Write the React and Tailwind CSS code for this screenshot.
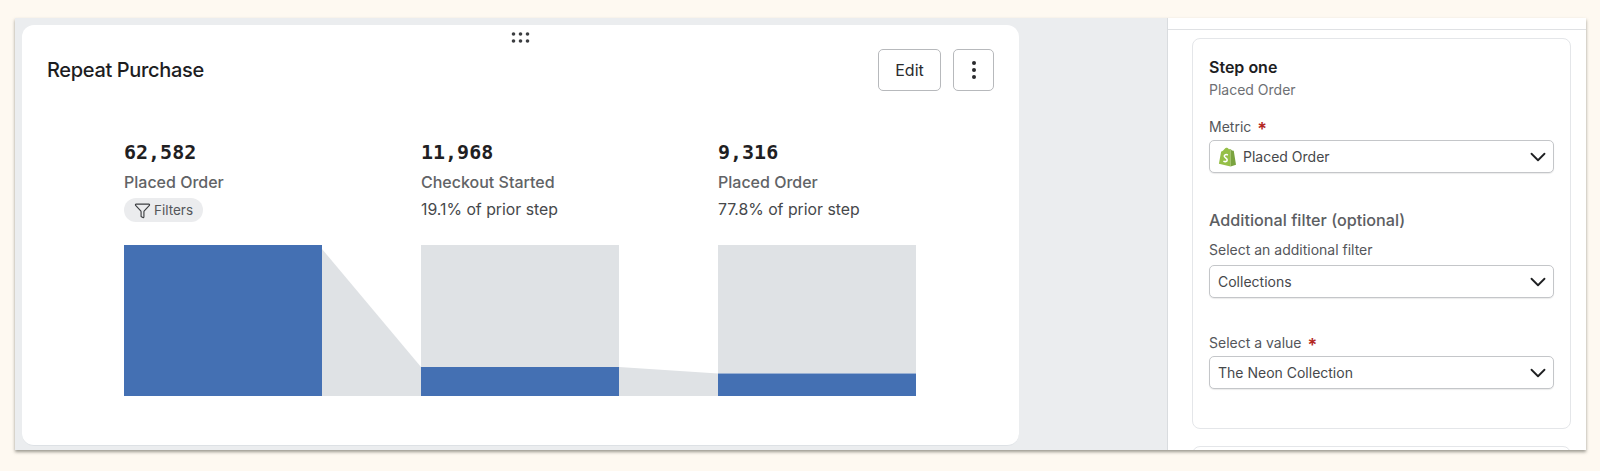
import React from "react";
import { ChevronDown, Funnel } from "lucide-react";

const inter = "font-['Inter','Noto_Sans',sans-serif]";

function Step({ value, label, children }) {
  return (
    <div className="w-[297px] shrink-0">
      <div className="h-7 font-['DejaVu_Sans_Mono',monospace] text-[20px] leading-7 font-bold text-[#1f2022]">{value}</div>
      <div className="mt-1.5 h-5 text-[16px] leading-5 font-medium text-[#616366]">{label}</div>
      <div className="mt-1.5 h-6 text-[15.800px] leading-6 text-[#46484b]">{children}</div>
    </div>
  );
}

function Funnelchart() {
  return (
    <svg width="792" height="151" viewBox="0 0 792 151" className="mt-[23px] block">
      <rect x="0" y="0" width="198" height="151" fill="#4470b3" />
      <polygon points="198,4 297,122 297,151 198,151" fill="#dfe2e5" />
      <rect x="297" y="0" width="198" height="122" fill="#dfe2e5" />
      <rect x="297" y="122" width="198" height="29" fill="#4470b3" />
      <polygon points="495,122 594,128.500 594,151 495,151" fill="#dfe2e5" />
      <rect x="594" y="0" width="198" height="128.500" fill="#dfe2e5" />
      <rect x="594" y="128.500" width="198" height="22.500" fill="#4470b3" />
    </svg>
  );
}

function ShopifyBag() {
  return (
    <svg width="18" height="20" viewBox="0 0 20 22" className="shrink-0">
      <path d="M1 18.500 L3.500 5 C5 4.500 6 4 6.500 3 C7.500 1 9 .5 10 .6 C11 .6 11.500 1.500 12 2.500 L14 2.200 L14 21.500 Z" fill="#95bf47" />
      <path d="M14 2.200 L15.500 3.700 L17.500 4 L20 19.500 L14 21.500 Z" fill="#7aa33f" />
      <path d="M11 8.800 C9 7.800 6.800 8.500 7 10.200 C7.200 11.900 10.200 12 10.200 14.200 C10.200 16.200 8 16.700 6 15.500" fill="none" stroke="#ffffff" strokeWidth="1.700" />
    </svg>
  );
}

function Select({ children }) {
  return (
    <div className="flex h-[33px] w-[345px] items-center justify-between rounded-[5px] border border-[#c4c6c9] bg-white pr-[2px] pl-2 text-[14px] text-[#46484b] shadow-[0_1px_1px_rgba(0,0,0,0.08)]">
      <div className="flex items-center gap-[7px]">{children}</div>
      <ChevronDown size={26} strokeWidth={1.7} className="text-[#1f2022]" />
    </div>
  );
}

function Req() {
  return <span className="ml-[6px] translate-y-[4px] text-[18px] leading-5 font-semibold text-[#b3261e]">*</span>;
}

export default function App() {
  return (
    <div className={`h-[471px] w-[1600px] overflow-hidden bg-[#fef9f1] pt-[18px] pl-[15px] ${inter}`}>
      <div className="flex h-[432px] w-[1571px] overflow-hidden bg-[#ebedef] shadow-[0_2px_3px_rgba(60,60,50,0.5)]">
        <div className="w-[581px] flex-1 pt-[7px] pl-[7px]">
          <div className="relative h-[421px] w-[997px] rounded-xl border-b border-[#dde1e5] bg-white">
            <svg width="20" height="11" viewBox="0 0 20 11" className="absolute top-[7px] left-[489px]" fill="#3c3e41">
              <circle cx="2.500" cy="2" r="1.800" /><circle cx="9.500" cy="2" r="1.800" /><circle cx="16.500" cy="2" r="1.800" />
              <circle cx="2.500" cy="9" r="1.800" /><circle cx="9.500" cy="9" r="1.800" /><circle cx="16.500" cy="9" r="1.800" />
            </svg>
            <div className="flex items-start justify-between pt-[24px] pr-[25px] pl-[25px]">
              <div className="mt-[9px] text-[20px] leading-[24px] font-medium tracking-[-0.34px] text-[#1d1d1f]">Repeat Purchase</div>
              <div className="flex gap-3">
                <div className="flex h-[42px] w-[63px] items-center justify-center rounded-[5px] border border-[#b7b9bc] text-[16px] text-[#2a2b2d]">Edit</div>
                <div className="flex h-[42px] w-[41px] flex-col items-center justify-center gap-[3px] rounded-[5px] border border-[#b7b9bc]">
                  <span className="h-1 w-1 rounded-full bg-[#2a2b2d]" />
                  <span className="h-1 w-1 rounded-full bg-[#2a2b2d]" />
                  <span className="h-1 w-1 rounded-full bg-[#2a2b2d]" />
                </div>
              </div>
            </div>
            <div className="mt-[47px] pl-[102px]">
              <div className="flex">
                <Step value="62,582" label="Placed Order">
                  <span className="inline-flex h-6 w-[79px] items-center gap-[3px] rounded-full bg-[#ebecee] pl-[10px] text-[13.500px] text-[#54565a]">
                    <Funnel size={17} strokeWidth={1.6} className="shrink-0 text-[#3c3e41]" />
                    Filters
                  </span>
                </Step>
                <Step value="11,968" label="Checkout Started">19.1% of prior step</Step>
                <Step value="9,316" label="Placed Order">77.8% of prior step</Step>
              </div>
              <Funnelchart />
            </div>
          </div>
        </div>
        <div className="h-full w-[419px] shrink-0 overflow-hidden border-l border-[#d9dcdf] bg-white">
          <div className="h-3 border-b border-[#dfe1e4]" />
          <div className="mt-2 mr-[15px] ml-[24px] h-[391px] rounded-lg border border-[#e4e6e9] px-4 pt-[18px]">
            <div className="text-[16px] leading-5 font-semibold text-[#1d1d1f]">Step one</div>
            <div className="mt-[3px] text-[14px] leading-5 text-[#6e7074]">Placed Order</div>
            <div className="mt-[16px] flex h-5 items-center text-[14px] text-[#54565a]">Metric<Req /></div>
            <div className="mt-[4px]">
              <Select>
                <ShopifyBag />
                Placed Order
              </Select>
            </div>
            <div className="mt-[36px] text-[16.200px] leading-[22px] font-medium text-[#5c5e62]">Additional filter (optional)</div>
            <div className="mt-[9px] text-[14px] leading-5 text-[#54565a]">Select an additional filter</div>
            <div className="mt-[5px]"><Select>Collections</Select></div>
            <div className="mt-[34px] flex h-5 items-center text-[14px] text-[#54565a]">Select a value<Req /></div>
            <div className="mt-[4px]"><Select>The Neon Collection</Select></div>
          </div>
          <div className="mt-[17px] mr-[15px] ml-[24px] h-10 rounded-lg border border-[#e4e6e9]" />
        </div>
      </div>
    </div>
  );
}
